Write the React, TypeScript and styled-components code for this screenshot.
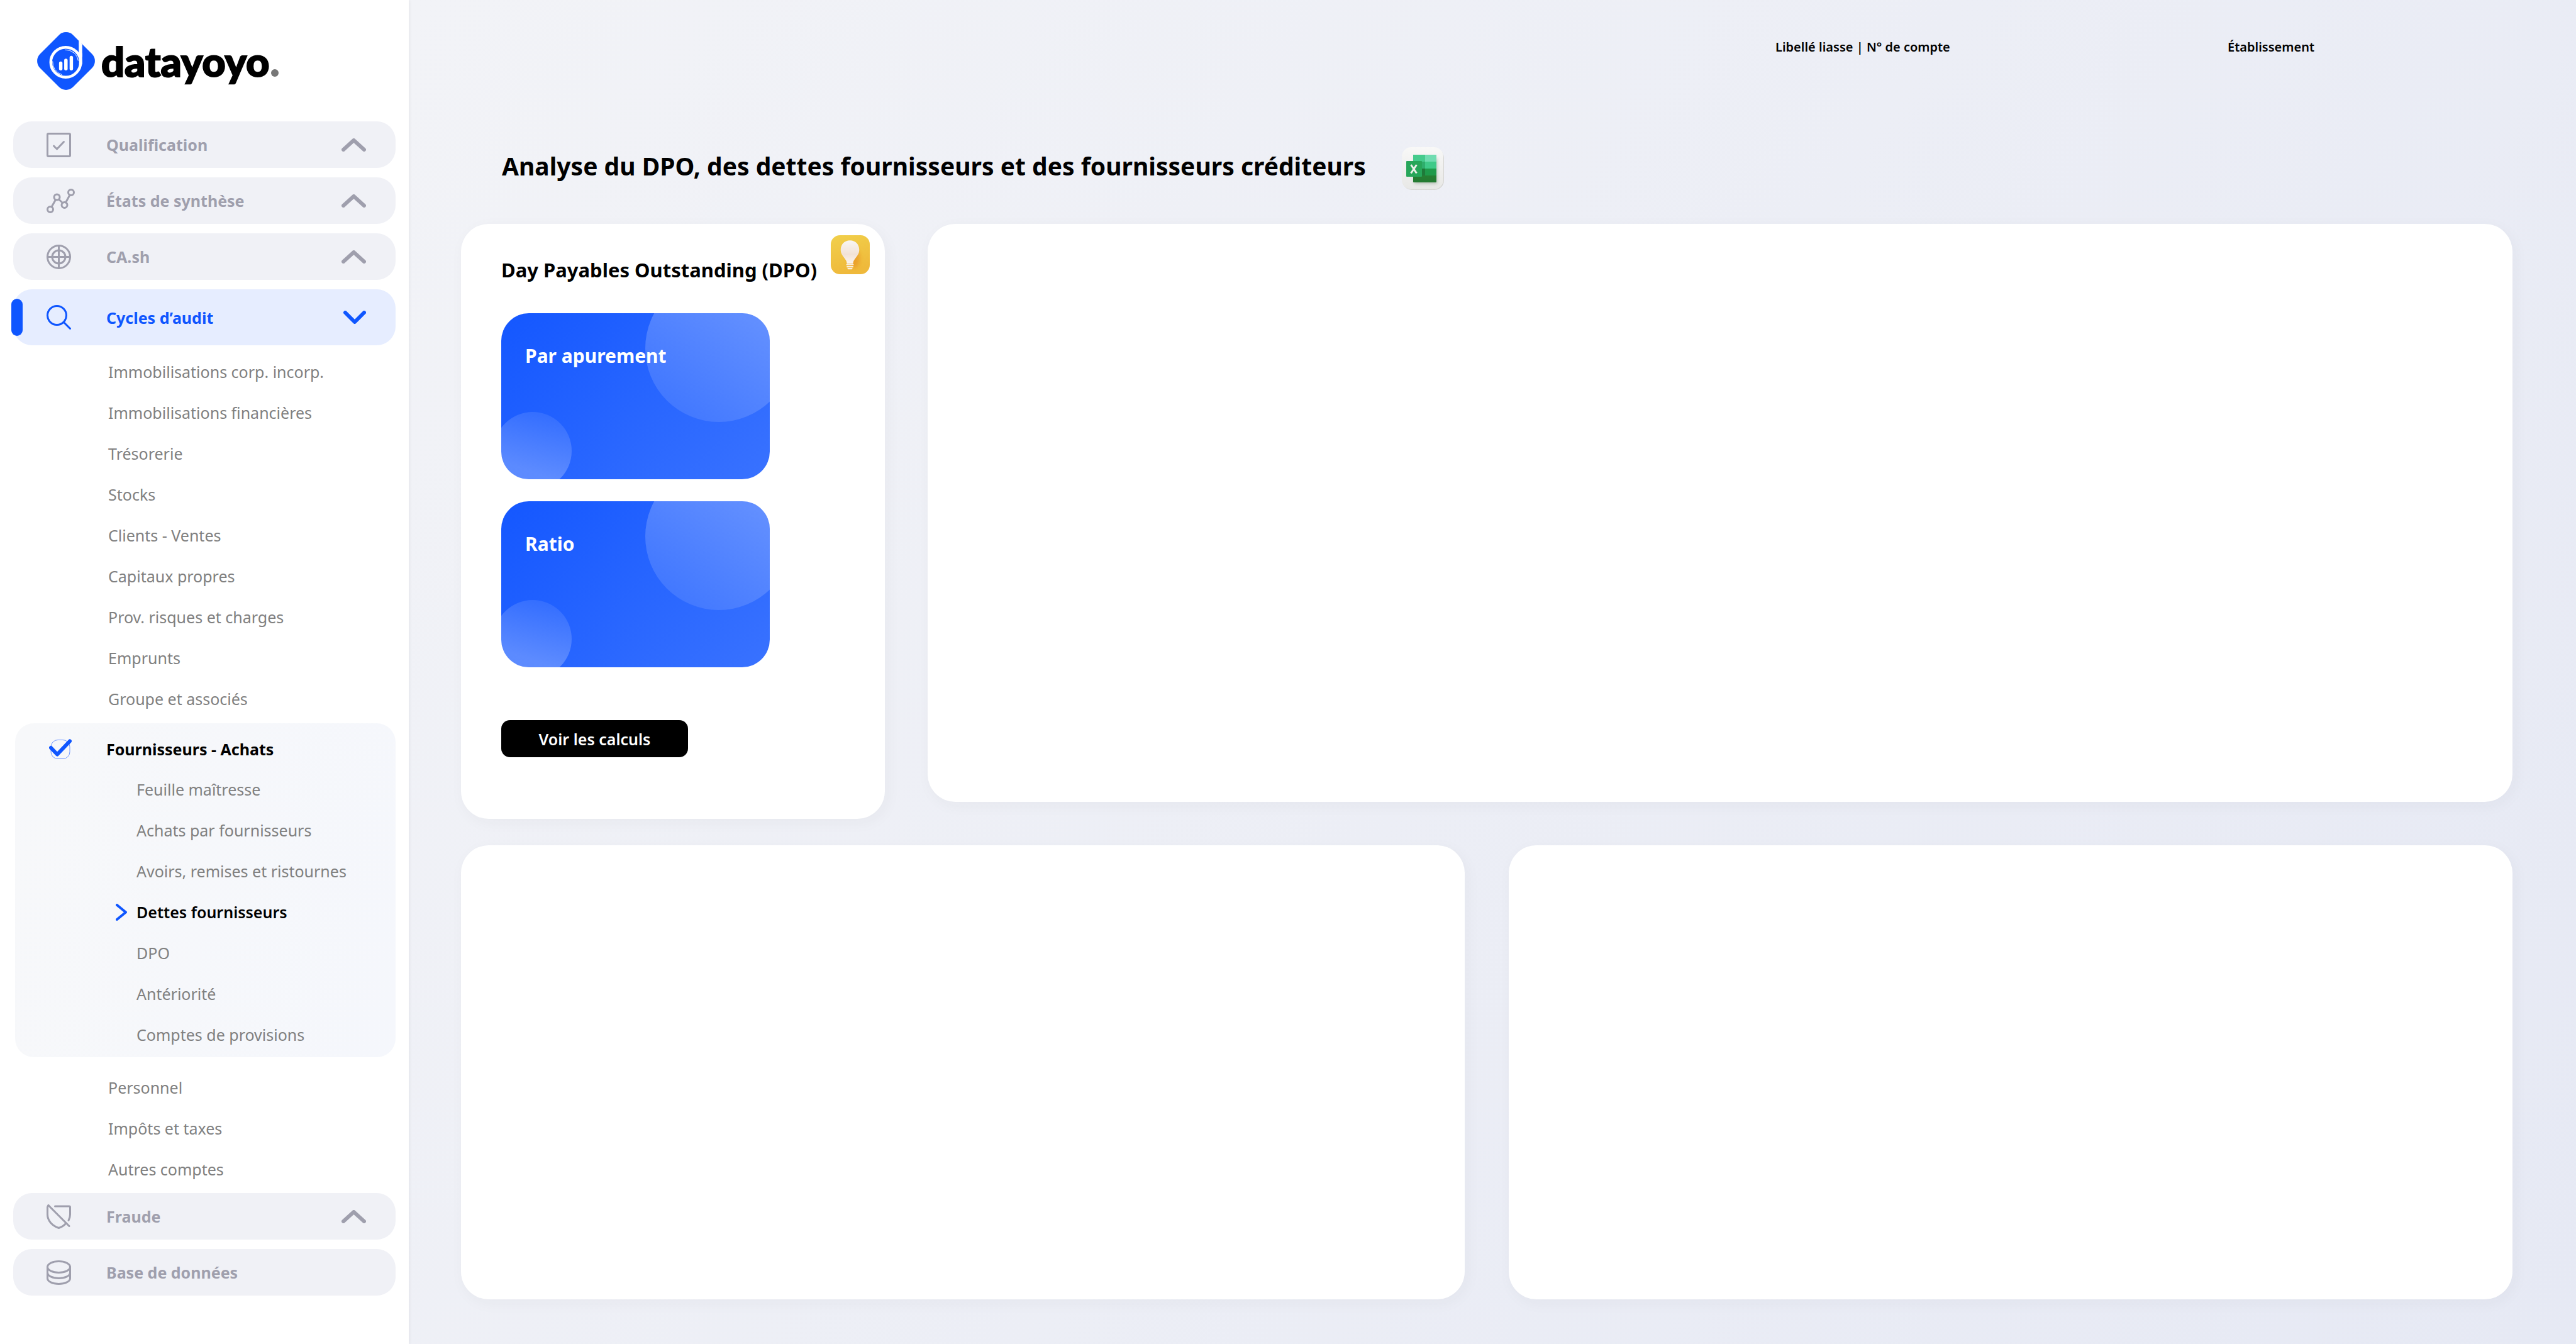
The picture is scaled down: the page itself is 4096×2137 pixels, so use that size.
import React from "react";
import styled, { createGlobalStyle, css } from "styled-components";

const color = {
  blue: "#0f56ff",
  blueSoft: "#e6edff",
  muted: "#9f9fad",
  pill: "#f0f1f6",
  text: "#000000",
  subtle: "#808080",
};

const GlobalStyle = createGlobalStyle`
  *, *::before, *::after { box-sizing: border-box; }
  body {
    margin: 0;
    background: #ffffff;
    color: ${color.text};
    font-family: "Noto Sans", "Open Sans", sans-serif;
    font-size: 25px;
  }
  h1, h2, p, ul { margin: 0; padding: 0; }
  ul { list-style: none; }
  button { border: 0; font: inherit; text-align: left; cursor: pointer; }
  a { color: inherit; text-decoration: none; }
`;

const Page = styled.div`
  display: flex;
  min-height: 100vh;
`;

/* ---------- Sidebar ---------- */

const Sidebar = styled.aside`
  position: relative;
  flex: 0 0 650px;
  padding: 0 21px 77px;
  background: #ffffff;
  box-shadow: 0 0 6px rgba(0, 0, 0, 0.08);
`;

const Brand = styled.a`
  display: flex;
  align-items: center;
  gap: 10px;
  height: 193px;
  padding: 0 0 0 38px;
`;

const Wordmark = styled.span`
  font-family: Lato, sans-serif;
  font-size: 65px;
  font-weight: 900;
  line-height: 80px;
  -webkit-text-stroke: 2px ${color.text};
`;

const WordmarkDot = styled.i`
  display: inline-block;
  width: 12px;
  height: 12px;
  margin-left: 2px;
  border-radius: 50%;
  background: #777777;
`;

const Nav = styled.nav`
  display: flex;
  flex-direction: column;
  gap: 15px;
`;

const Cluster = styled.div`
  display: flex;
  flex-direction: column;
`;

const GroupButton = styled.button<{ $active?: boolean }>`
  position: relative;
  display: grid;
  grid-template-columns: 95px 1fr auto;
  align-items: center;
  width: 100%;
  height: ${(p) => (p.$active ? 89 : 74)}px;
  padding: 0 47px 0 53px;
  border-radius: 30px;
  background: ${(p) => (p.$active ? color.blueSoft : color.pill)};
  color: ${(p) => (p.$active ? color.blue : color.muted)};
  font-weight: 700;
  ${(p) =>
    p.$active &&
    css`
      &::before {
        content: "";
        position: absolute;
        left: -3px;
        top: 15px;
        bottom: 15px;
        width: 18px;
        border-radius: 9px;
        background: ${color.blue};
      }
    `}
`;

const SubList = styled.ul<{ $nested?: boolean }>`
  padding-left: ${(p) => (p.$nested ? 193 : 151)}px;
  color: ${color.subtle};
  line-height: 65px;
`;

const SubItem = styled.li<{ $current?: boolean }>`
  position: relative;
  height: 65px;
  ${(p) =>
    p.$current &&
    css`
      color: ${color.text};
      font-weight: 600;
    `}
`;

const CurrentMark = styled.span`
  position: absolute;
  left: -33px;
  top: 0;
  display: flex;
  align-items: center;
  height: 100%;
`;

const Spacer = styled.div<{ $size: number }>`
  height: ${(p) => p.$size}px;
`;

const OpenPanel = styled.section`
  margin-left: 3px;
  padding: 8px 0 3px;
  border-radius: 30px;
  background: linear-gradient(100deg, #f7f8fa, #f5f7fc);
`;

const PanelTitle = styled.a`
  display: grid;
  grid-template-columns: 91px 1fr;
  align-items: center;
  height: 65px;
  padding-left: 54px;
  font-weight: 700;
`;

/* ---------- Main area ---------- */

const Main = styled.main`
  flex: 1;
  display: flex;
  flex-direction: column;
  min-width: 0;
  padding: 61px 101px 71px 83px;
  background: linear-gradient(125deg, #f2f3f7, #e6e9f4);
`;

const ContextBar = styled.header`
  display: grid;
  grid-template-columns: 719px 453px;
  justify-content: end;
  font-size: 20px;
  font-weight: 600;
  line-height: 28px;
`;

const TitleRow = styled.div`
  display: flex;
  align-items: flex-start;
  gap: 57px;
  margin: 145px 0 54px;
  padding-left: 65px;
`;

const Title = styled.h1`
  font-size: 39px;
  font-weight: 700;
  line-height: 60px;
`;

const IconButton = styled.button`
  display: block;
  padding: 0;
  background: none;
  line-height: 0;
`;

const TopRow = styled.div`
  display: grid;
  grid-template-columns: 674px 1fr;
  gap: 68px;
`;

const BottomRow = styled.div`
  flex: 1;
  display: grid;
  grid-template-columns: 1fr 1fr;
  gap: 70px;
  margin-top: 42px;
`;

const Card = styled.section`
  border-radius: 44px;
  background: #ffffff;
  box-shadow: 4px 6px 24px rgba(40, 40, 60, 0.04);
`;

const ChartCard = styled(Card)`
  margin-bottom: 27px;
`;

const DpoCard = styled(Card)`
  position: relative;
  display: flex;
  flex-direction: column;
  align-items: flex-start;
  padding: 52px 64px 98px;
`;

const CardTitle = styled.h2`
  margin-bottom: 48px;
  font-size: 31px;
  font-weight: 700;
  line-height: 42px;
  white-space: nowrap;
`;

const HintButton = styled(IconButton)`
  position: absolute;
  top: 18px;
  right: 24px;
`;

const Tiles = styled.div`
  display: grid;
  gap: 35px;
  margin-bottom: 84px;
`;

const Tile = styled.button`
  position: relative;
  display: flex;
  align-items: flex-start;
  width: 427px;
  height: 264px;
  padding: 48px 38px;
  overflow: hidden;
  border-radius: 44px;
  background: linear-gradient(135deg, #1457ff, #3972ff);
  color: #ffffff;
  font-size: 30px;
  font-weight: 700;
  line-height: 40px;

  &::before,
  &::after {
    content: "";
    position: absolute;
    border-radius: 50%;
    background: linear-gradient(
      200deg,
      rgba(255, 255, 255, 0.26) 30%,
      rgba(255, 255, 255, 0.08)
    );
  }
  &::before {
    top: -61px;
    left: 229px;
    width: 234px;
    height: 234px;
  }
  &::after {
    top: 157px;
    left: -12px;
    width: 124px;
    height: 124px;
    background: linear-gradient(
      20deg,
      rgba(255, 255, 255, 0.26) 30%,
      rgba(255, 255, 255, 0.06)
    );
  }
`;

const TileLabel = styled.span`
  position: relative;
  z-index: 1;
`;

const ActionButton = styled.button`
  width: 297px;
  height: 59px;
  padding: 0;
  border-radius: 14px;
  background: #000000;
  color: #ffffff;
  font-weight: 600;
  text-align: center;
`;

/* ---------- Drawings ---------- */

const LogoMark = () => (
  <svg width="92" height="92" viewBox="0 0 93 93" aria-hidden="true">
    <rect x="9" y="9" width="75" height="75" rx="16" transform="rotate(45 46.5 46.5)" fill={color.blue} />
    <path d="M67 8 V40 H72.5 V20.500 Z" fill="#fff" />
    <circle cx="46" cy="48.5" r="24" fill="none" stroke="#fff" strokeWidth="4.5" />
    <path d="M70 34 V52" stroke="#fff" strokeWidth="5" />
    <path d="M45 28.5 A20.5 20.5 0 0 1 66 46" fill="none" stroke="#fff" strokeWidth="1" />
    <path d="M25 47 A21 21 0 0 0 40 68.500" fill="none" stroke="#fff" strokeWidth="1" />
    <g stroke="#fff" strokeWidth="5.5" strokeLinecap="round">
      <path d="M38 50 V59" />
      <path d="M46.300 45.500 V59" />
      <path d="M55 41 V59" />
    </g>
  </svg>
);

type IconName = "check" | "nodes" | "target" | "search" | "shield" | "database";

const shapes: Record<IconName, React.ReactNode> = {
  check: (
    <>
      <rect x="1.5" y="1.5" width="36" height="36" rx="1.5" />
      <path d="M11.500 21 L16.500 26 L27.500 14.500" />
    </>
  ),
  nodes: (
    <>
      <circle cx="6" cy="33" r="4.5" />
      <circle cx="16.500" cy="13.500" r="4.500" />
      <circle cx="28.500" cy="26" r="4.500" />
      <circle cx="39" cy="6" r="4.500" />
      <path d="M8 29 L14.500 17.500 M19.500 17 L25.500 22.500 M30.500 22 L37 10" />
    </>
  ),
  target: (
    <>
      <circle cx="19.500" cy="19.500" r="18" />
      <circle cx="19.500" cy="19.500" r="10.500" />
      <path d="M19.500 1.500 V37.500 M1.500 19.500 H37.500" />
    </>
  ),
  search: (
    <>
      <circle cx="16.500" cy="16.500" r="15" />
      <path d="M27.500 27.500 L37.500 37.500" />
    </>
  ),
  shield: (
    <>
      <path d="M3 1.500 L36 34.500" />
      <path d="M3 1.500 C2 2.500 1.500 3 1.500 4.500 V16 C1.500 26 9 34 19.500 37.500 C24 36 28 33.500 31 30" />
      <path d="M13.500 3 H36 Q37.500 3 37.500 4.500 V16 Q37.500 21 35 25.500" />
    </>
  ),
  database: (
    <>
      <ellipse cx="19.500" cy="10.500" rx="18" ry="9" />
      <path d="M1.500 10.500 V28.500 C1.500 33.500 9.500 37.500 19.500 37.500 S37.500 33.500 37.500 28.500 V10.500" />
      <path d="M1.500 19.500 C1.500 24.500 9.500 28.500 19.500 28.500 S37.500 24.500 37.500 19.500" />
    </>
  ),
};

const NavIcon = ({ name }: { name: IconName }) => (
  <svg
    width={name === "nodes" ? 45 : 39}
    height="39"
    viewBox={name === "nodes" ? "0 0 45 39" : "0 0 39 39"}
    fill="none"
    stroke="currentColor"
    strokeWidth="3"
    strokeLinecap="round"
    strokeLinejoin="round"
    aria-hidden="true"
  >
    {shapes[name]}
  </svg>
);

const Chevron = ({ down }: { down?: boolean }) => (
  <svg
    width="39"
    height="21"
    viewBox="0 0 39 21"
    fill="none"
    stroke="currentColor"
    strokeWidth="6"
    strokeLinecap="round"
    strokeLinejoin="round"
    aria-hidden="true"
  >
    <path d={down ? "M6 3 L21 18 L36 3" : "M3 18 L19.500 3 L36 18"} />
  </svg>
);

const CurrentArrow = () => (
  <svg width="18" height="27" viewBox="0 0 18 27" fill="none" stroke={color.blue} strokeWidth="4" strokeLinecap="round" strokeLinejoin="round" aria-hidden="true">
    <path d="M2 2 L16 13.500 L2 25" />
  </svg>
);

const PanelCheck = () => (
  <svg width="36" height="34" viewBox="0 0 36 34" fill="none" aria-hidden="true">
    <rect x="3" y="2.500" width="30" height="30" rx="11" stroke="#6f97ff" />
    <path d="M3 15 L13 25.500 L33 4.500" stroke={color.blue} strokeWidth="6" strokeLinecap="round" strokeLinejoin="round" />
  </svg>
);

const SpreadsheetIcon = () => (
  <svg width="67" height="68" viewBox="0 0 67 68" role="img" aria-label="Exporter vers Excel">
    <defs>
      <linearGradient id="sheet-plate" x1="0" y1="0" x2="0" y2="1">
        <stop offset="0" stopColor="#f8f8f7" />
        <stop offset="1" stopColor="#e8e8e6" />
      </linearGradient>
      <linearGradient id="sheet-base" x1="0" y1="0" x2="0" y2="1">
        <stop offset="0" stopColor="#2c8f3c" />
        <stop offset="1" stopColor="#247a30" />
      </linearGradient>
      <filter id="sheet-shade" x="-30%" y="-30%" width="160%" height="160%">
        <feGaussianBlur stdDeviation="2.500" />
      </filter>
    </defs>
    <rect x="1" y="2" width="66" height="66" rx="15" fill="#d6d6d4" />
    <rect x="0" y="0" width="66" height="67" rx="15" fill="url(#sheet-plate)" />
    <rect x="20" y="18" width="36" height="40" fill="#5d7a5f" opacity="0.4" filter="url(#sheet-shade)" />
    <rect x="18" y="12" width="37" height="44" rx="1" fill="url(#sheet-base)" />
    <rect x="18" y="12" width="19" height="11" fill="#45cb8c" />
    <rect x="37" y="12" width="18" height="11" fill="#70dcb0" />
    <rect x="18" y="23" width="19" height="11" fill="#2fae6c" />
    <rect x="37" y="23" width="18" height="11" fill="#3fca88" />
    <rect x="18" y="34" width="19" height="11" fill="#1f7a3a" />
    <rect x="37" y="34" width="18" height="11" fill="#1f9a4a" />
    <rect x="7" y="22" width="25" height="25" rx="1" fill="#27a659" />
    <path d="M14.500 28 L23.500 41.500 M23.500 28 L14.500 41.500" stroke="#eef0ea" strokeWidth="3" />
  </svg>
);

const BulbIcon = () => (
  <svg width="62" height="62" viewBox="0 0 63 63" role="img" aria-label="Aide">
    <defs>
      <linearGradient id="bulb-plate" x1="0" y1="0" x2="0.3" y2="1">
        <stop offset="0" stopColor="#f1d04b" />
        <stop offset="1" stopColor="#efb93b" />
      </linearGradient>
      <linearGradient id="bulb-glass" x1="0" y1="0" x2="0" y2="1">
        <stop offset="0" stopColor="#f8f6f5" />
        <stop offset="0.6" stopColor="#f2e2d6" />
        <stop offset="1" stopColor="#faf4ef" />
      </linearGradient>
      <filter id="bulb-shade" x="-50%" y="-50%" width="200%" height="200%">
        <feGaussianBlur stdDeviation="3" />
      </filter>
    </defs>
    <rect width="63" height="63" rx="15" fill="url(#bulb-plate)" />
    <ellipse cx="37" cy="37" rx="10" ry="16" fill="#e78a1c" opacity="0.55" filter="url(#bulb-shade)" />
    <path d="M31 8.500 C22 8.500 16 15 16 24 C16 34 26 38 26 46 H36 C36 38 46 34 46 24 C46 15 40 8.500 31 8.500 Z" fill="url(#bulb-glass)" />
    <path d="M26 47.500 H36 M26.500 51 H35.500 M28 54 H34" stroke="#fbeedd" strokeWidth="2.200" strokeLinecap="round" />
  </svg>
);

/* ---------- Data ---------- */

const beforePanel = [
  "Immobilisations corp. incorp.",
  "Immobilisations financières",
  "Trésorerie",
  "Stocks",
  "Clients - Ventes",
  "Capitaux propres",
  "Prov. risques et charges",
  "Emprunts",
  "Groupe et associés",
];

const panelItems = [
  "Feuille maîtresse",
  "Achats par fournisseurs",
  "Avoirs, remises et ristournes",
  "Dettes fournisseurs",
  "DPO",
  "Antériorité",
  "Comptes de provisions",
];

const afterPanel = ["Personnel", "Impôts et taxes", "Autres comptes"];

type GroupProps = { icon: IconName; label: string; active?: boolean; leaf?: boolean };

const Group = ({ icon, label, active, leaf }: GroupProps) => (
  <GroupButton type="button" $active={active} aria-expanded={leaf ? undefined : !!active}>
    <NavIcon name={icon} />
    <span>{label}</span>
    {!leaf && <Chevron down={active} />}
  </GroupButton>
);

type LinksProps = { items: string[]; nested?: boolean; current?: string };

const Links = ({ items, nested, current }: LinksProps) => (
  <SubList $nested={nested}>
    {items.map((item) => (
      <SubItem key={item} $current={item === current}>
        {item === current && (
          <CurrentMark>
            <CurrentArrow />
          </CurrentMark>
        )}
        <a href="#">{item}</a>
      </SubItem>
    ))}
  </SubList>
);

export default function App() {
  return (
    <>
      <GlobalStyle />
      <Page>
        <Sidebar>
          <Brand href="#" aria-label="datayoyo">
            <LogoMark />
            <Wordmark>
              datayoyo
              <WordmarkDot />
            </Wordmark>
          </Brand>
          <Nav>
            <Group icon="check" label="Qualification" />
            <Group icon="nodes" label="États de synthèse" />
            <Group icon="target" label="CA.sh" />
            <Cluster>
              <Group icon="search" label="Cycles d’audit" active />
              <Spacer $size={10} />
              <Links items={beforePanel} />
              <Spacer $size={6} />
              <OpenPanel>
                <PanelTitle href="#">
                  <PanelCheck />
                  Fournisseurs - Achats
                </PanelTitle>
                <Links items={panelItems} nested current="Dettes fournisseurs" />
              </OpenPanel>
              <Spacer $size={16} />
              <Links items={afterPanel} />
              <Spacer $size={5} />
              <Group icon="shield" label="Fraude" />
            </Cluster>
            <Group icon="database" label="Base de données" leaf />
          </Nav>
        </Sidebar>
        <Main>
          <ContextBar>
            <span>Libellé liasse | N° de compte</span>
            <span>Établissement</span>
          </ContextBar>
          <TitleRow>
            <Title>Analyse du DPO, des dettes fournisseurs et des fournisseurs créditeurs</Title>
            <IconButton type="button">
              <SpreadsheetIcon />
            </IconButton>
          </TitleRow>
          <TopRow>
            <DpoCard>
              <CardTitle>Day Payables Outstanding (DPO)</CardTitle>
              <HintButton type="button">
                <BulbIcon />
              </HintButton>
              <Tiles>
                <Tile type="button">
                  <TileLabel>Par apurement</TileLabel>
                </Tile>
                <Tile type="button">
                  <TileLabel>Ratio</TileLabel>
                </Tile>
              </Tiles>
              <ActionButton type="button">Voir les calculs</ActionButton>
            </DpoCard>
            <ChartCard />
          </TopRow>
          <BottomRow>
            <Card />
            <Card />
          </BottomRow>
        </Main>
      </Page>
    </>
  );
}
